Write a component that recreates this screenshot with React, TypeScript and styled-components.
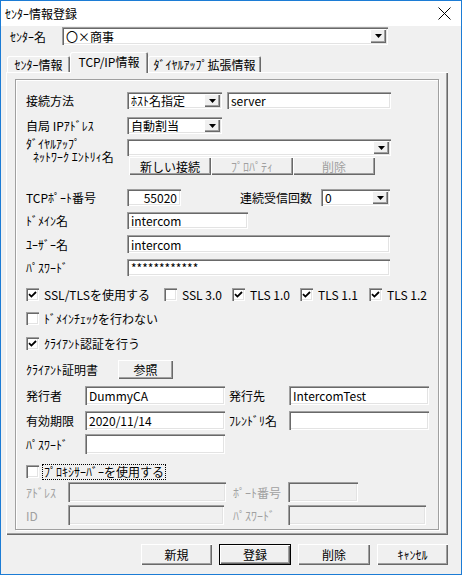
import React from "react";
import styled, { createGlobalStyle, css } from "styled-components";

const GlobalStyle = createGlobalStyle`
  html, body {
    margin: 0;
    padding: 0;
    background: #f0f0f0;
  }
  body {
    font-family: "Noto Sans CJK JP", "Liberation Sans", sans-serif;
    font-size: 12px;
    color: #000;
  }
`;

const sunken = css`
  box-shadow: inset 1px 1px #a0a0a0, inset 2px 2px #696969, inset -1px -1px #fff,
    inset -2px -2px #e3e3e3;
`;

const raised = css`
  box-shadow: inset 1px 1px #fff, inset -1px -1px #696969, inset -2px -2px #a0a0a0;
`;

function App() {
  return (
    <>
      <GlobalStyle />
      <Window>
        <TitleBar>
          <span>ｾﾝﾀｰ情報登録</span>
          <svg width="13" height="13" viewBox="0 0 13 13">
            <path d="M0.5 0.5 L12.5 12.5 M12.5 0.5 L0.5 12.5" stroke="#000" strokeWidth="1" />
          </svg>
        </TitleBar>
        <Body>
          <CenterRow>
            <Label $w={52}>ｾﾝﾀｰ名</Label>
            <Combo $w={326} value="〇×商事" />
          </CenterRow>
          <TabStrip>
            <Tab $w={63}>ｾﾝﾀｰ情報</Tab>
            <Tab $w={78} $active>
              TCP/IP情報
            </Tab>
            <Tab $w={113}>ﾀﾞｲﾔﾙｱｯﾌﾟ拡張情報</Tab>
          </TabStrip>
          <Panel>
            <GroupBox>
              <Row $mt={12} $h={17}>
                <Label>接続方法</Label>
                <Combo $w={95} value="ﾎｽﾄ名指定" />
                <TextBox $w={164} $ml={5}>server</TextBox>
              </Row>
              <Row $mt={8} $h={17}>
                <Label>自局 IPｱﾄﾞﾚｽ</Label>
                <Combo $w={95} value="自動割当" />
              </Row>
              <DialRow>
                <StackLabel>
                  <div>ﾀﾞｲﾔﾙｱｯﾌﾟ</div>
                  <Indent>ﾈｯﾄﾜｰｸ ｴﾝﾄﾘｨ名</Indent>
                </StackLabel>
                <DialControls>
                  <Slot $h={17}>
                    <Combo $w={264} value="" />
                  </Slot>
                  <ButtonGroup>
                    <PushButton $w={82} $h={18}>
                      新しい接続
                    </PushButton>
                    <PushButton $w={82} $h={18} disabled>
                      ﾌﾟﾛﾊﾟﾃｨ
                    </PushButton>
                    <PushButton $w={82} $h={18} disabled>
                      削除
                    </PushButton>
                  </ButtonGroup>
                </DialControls>
              </DialRow>
              <Row $mt={14} $h={17}>
                <Label>TCPﾎﾟｰﾄ番号</Label>
                <TextBox $w={54} $right>
                  55020
                </TextBox>
                <Label $w={81} $ml={59}>
                  連続受信回数
                </Label>
                <Combo $w={69} value="0" />
              </Row>
              <Row $mt={6} $h={17}>
                <Label>ﾄﾞﾒｲﾝ名</Label>
                <TextBox $w={121}>intercom</TextBox>
              </Row>
              <Row $mt={6} $h={18}>
                <Label>ﾕｰｻﾞｰ名</Label>
                <TextBox $w={263}>intercom</TextBox>
              </Row>
              <Row $mt={6} $h={17}>
                <Label>ﾊﾟｽﾜｰﾄﾞ</Label>
                <TextBox $w={263}>************</TextBox>
              </Row>
              <Row $mt={12} $h={13}>
                <CheckItem $w={138} checked label="SSL/TLSを使用する" />
                <CheckItem $w={68} label="SSL 3.0" />
                <CheckItem $w={68} checked label="TLS 1.0" />
                <CheckItem $w={69} checked label="TLS 1.1" />
                <CheckItem checked label="TLS 1.2" />
              </Row>
              <Row $mt={11} $h={13}>
                <CheckItem label="ﾄﾞﾒｲﾝﾁｪｯｸを行わない" />
              </Row>
              <Row $mt={12} $h={13}>
                <CheckItem checked label="ｸﾗｲｱﾝﾄ認証を行う" />
              </Row>
              <Row $mt={10} $h={19}>
                <Label $w={92}>ｸﾗｲｱﾝﾄ証明書</Label>
                <PushButton $w={55} $h={19}>
                  参照
                </PushButton>
              </Row>
              <Row $mt={7} $h={19}>
                <Label $w={59}>発行者</Label>
                <TextBox $w={140}>DummyCA</TextBox>
                <Label $w={60} $ml={4}>
                  発行先
                </Label>
                <TextBox $w={140}>IntercomTest</TextBox>
              </Row>
              <Row $mt={6} $h={19}>
                <Label $w={59}>有効期限</Label>
                <TextBox $w={140}>2020/11/14</TextBox>
                <Label $w={60} $ml={4}>
                  ﾌﾚﾝﾄﾞﾘ名
                </Label>
                <TextBox $w={140} />
              </Row>
              <Row $mt={4} $h={20}>
                <Label $w={59}>ﾊﾟｽﾜｰﾄﾞ</Label>
                <TextBox $w={140} />
              </Row>
              <Row $mt={11} $h={13}>
                <CheckItem focused label="ﾌﾟﾛｷｼｻｰﾊﾞｰを使用する" />
              </Row>
              <Row $mt={4} $h={20}>
                <Label $w={42} $disabled>
                  ｱﾄﾞﾚｽ
                </Label>
                <TextBox $w={158} $disabled />
                <Label $w={55} $ml={7} $disabled>
                  ﾎﾟｰﾄ番号
                </Label>
                <TextBox $w={70} $disabled />
              </Row>
              <Row $mt={3} $h={20}>
                <Label $w={42} $disabled>
                  ID
                </Label>
                <TextBox $w={156} $disabled />
                <Label $w={55} $ml={9} $disabled>
                  ﾊﾟｽﾜｰﾄﾞ
                </Label>
                <TextBox $w={138} $disabled />
              </Row>
            </GroupBox>
          </Panel>
          <FooterButtons>
            <PushButton $w={71} $h={21}>
              新規
            </PushButton>
            <PushButton $w={72} $h={21} $default>
              登録
            </PushButton>
            <PushButton $w={72} $h={21}>
              削除
            </PushButton>
            <PushButton $w={71} $h={21}>
              ｷｬﾝｾﾙ
            </PushButton>
          </FooterButtons>
        </Body>
      </Window>
    </>
  );
}

function Combo({ $w, value }: { $w: number; value: string }) {
  return (
    <ComboBox $w={$w}>
      <ComboText>{value}</ComboText>
      <DropButton>
        <svg width="7" height="4" viewBox="0 0 7 4">
          <path d="M0 0 H7 L3.5 4 Z" fill="#000" />
        </svg>
      </DropButton>
    </ComboBox>
  );
}

function CheckItem({
  label,
  checked,
  focused,
  $w,
}: {
  label: string;
  checked?: boolean;
  focused?: boolean;
  $w?: number;
}) {
  return (
    <CheckWrap $w={$w}>
      <CheckBox>
        {checked && (
          <svg width="9" height="9" viewBox="0 0 9 9">
            <path d="M1 4.2 L3.4 6.6 L8 2" stroke="#000" strokeWidth="1.8" fill="none" />
          </svg>
        )}
      </CheckBox>
      <CheckText $focused={focused}>{label}</CheckText>
    </CheckWrap>
  );
}

const Window = styled.div`
  box-sizing: border-box;
  width: 462px;
  height: 575px;
  border: 1px solid #1c7cd5;
  display: flex;
  flex-direction: column;
  background: #f0f0f0;
`;

const TitleBar = styled.div`
  height: 25px;
  flex-shrink: 0;
  background: #fff;
  display: flex;
  align-items: center;
  justify-content: space-between;
  padding: 0 10px 0 4px;
`;

const Body = styled.div`
  flex: 1;
  display: flex;
  flex-direction: column;
`;

const CenterRow = styled.div`
  display: flex;
  align-items: center;
  height: 18px;
  margin-top: 1px;
  padding-left: 9px;
`;

const TabStrip = styled.div`
  display: flex;
  align-items: flex-end;
  height: 21px;
  margin: 7px 0 -1px 6px;
`;

const Tab = styled.div<{ $w: number; $active?: boolean }>`
  box-sizing: border-box;
  width: ${(p) => p.$w}px;
  height: ${(p) => (p.$active ? 21 : 17)}px;
  background: #f0f0f0;
  display: flex;
  align-items: center;
  justify-content: center;
  white-space: nowrap;
  border-radius: 2px 2px 0 0;
  box-shadow: inset 1px 1px #fff, inset -1px 0 #696969, inset -2px 0 #a0a0a0;
  ${(p) =>
    p.$active &&
    css`
      position: relative;
      z-index: 1;
      padding-bottom: 2px;
    `}
`;

const Panel = styled.div`
  box-sizing: border-box;
  width: 442px;
  height: 463px;
  margin-left: 5px;
  padding: 7px 0 0 9px;
  ${raised}
`;

const GroupBox = styled.div`
  box-sizing: border-box;
  width: 424px;
  height: 451px;
  border: 1px solid #a0a0a0;
  box-shadow: inset 1px 1px #fff, 1px 1px #fff;
  padding-left: 10px;
  display: flex;
  flex-direction: column;
`;

const Row = styled.div<{ $mt: number; $h: number }>`
  display: flex;
  align-items: center;
  margin-top: ${(p) => p.$mt}px;
  height: ${(p) => p.$h}px;
`;

const Slot = styled.div<{ $h: number }>`
  display: flex;
  height: ${(p) => p.$h}px;
`;

const DialRow = styled.div`
  display: flex;
  margin-top: 5px;
`;

const StackLabel = styled.div`
  width: 101px;
  flex-shrink: 0;
  line-height: 13px;
  margin-top: -2px;
  white-space: nowrap;
`;

const Indent = styled.div`
  padding-left: 7px;
`;

const DialControls = styled.div`
  display: flex;
  flex-direction: column;
  gap: 1px;
`;

const ButtonGroup = styled.div`
  display: flex;
  margin-left: 2px;
`;

const Label = styled.span<{ $w?: number; $ml?: number; $disabled?: boolean }>`
  width: ${(p) => p.$w ?? 101}px;
  margin-left: ${(p) => p.$ml ?? 0}px;
  flex-shrink: 0;
  white-space: nowrap;
  color: ${(p) => (p.$disabled ? "#a0a0a0" : "#000")};
`;

const TextBox = styled.div<{ $w: number; $ml?: number; $right?: boolean; $disabled?: boolean }>`
  box-sizing: border-box;
  width: ${(p) => p.$w}px;
  height: 100%;
  margin-left: ${(p) => p.$ml ?? 0}px;
  padding: 0 4px;
  display: flex;
  align-items: center;
  justify-content: ${(p) => (p.$right ? "flex-end" : "flex-start")};
  background: ${(p) => (p.$disabled ? "#f0f0f0" : "#fff")};
  white-space: nowrap;
  overflow: hidden;
  ${sunken}
`;

const ComboBox = styled.div<{ $w: number }>`
  box-sizing: border-box;
  width: ${(p) => p.$w}px;
  height: 100%;
  padding: 2px 2px 2px 4px;
  display: flex;
  align-items: center;
  background: #fff;
  ${sunken}
`;

const ComboText = styled.span`
  flex: 1;
  white-space: nowrap;
  overflow: hidden;
`;

const DropButton = styled.span`
  box-sizing: border-box;
  width: 16px;
  height: 100%;
  display: flex;
  align-items: center;
  justify-content: center;
  background: #f0f0f0;
  ${raised}
`;

const CheckWrap = styled.label<{ $w?: number }>`
  display: flex;
  align-items: center;
  gap: 4px;
  width: ${(p) => (p.$w ? `${p.$w}px` : "auto")};
  white-space: nowrap;
`;

const CheckBox = styled.span`
  box-sizing: border-box;
  width: 13px;
  height: 13px;
  flex-shrink: 0;
  display: flex;
  align-items: center;
  justify-content: center;
  background: #fff;
  ${sunken}
`;

const CheckText = styled.span<{ $focused?: boolean }>`
  line-height: 14px;
  padding: 0 1px;
  outline: ${(p) => (p.$focused ? "1px dotted #000" : "none")};
`;

const PushButton = styled.button<{ $w: number; $h: number; $default?: boolean }>`
  box-sizing: border-box;
  width: ${(p) => p.$w}px;
  height: ${(p) => p.$h}px;
  flex-shrink: 0;
  padding: 0;
  border: none;
  font: inherit;
  color: #000;
  background: #f0f0f0;
  white-space: nowrap;
  ${(p) =>
    p.$default
      ? css`
          box-shadow: inset 0 0 0 1px #000, inset 2px 2px #fff, inset -2px -2px #696969,
            inset -3px -3px #a0a0a0;
        `
      : raised}
  &:disabled {
    color: #a0a0a0;
  }
`;

const FooterButtons = styled.div`
  display: flex;
  justify-content: flex-end;
  gap: 7px;
  margin-top: 9px;
  padding-right: 13px;
`;

export default App;
